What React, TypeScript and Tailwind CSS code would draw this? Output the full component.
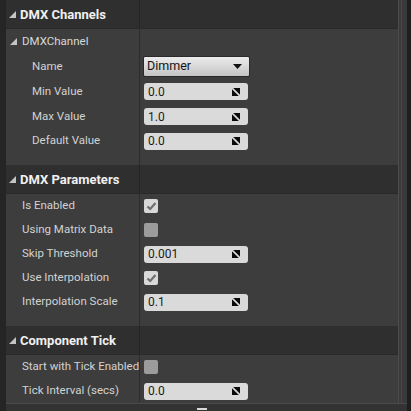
import React from "react";

const font = { fontFamily: "Roboto, 'Liberation Sans', sans-serif" };

function Tri({ className = "" }: { className?: string }) {
  return (
    <svg width="7" height="7" viewBox="0 0 7 7" className={className}>
      <polygon points="7,0 7,7 0,7" fill="#c4c4c4" />
    </svg>
  );
}

function SpinIcon() {
  return (
    <svg width="8" height="8" viewBox="0 0 8 8">
      <polygon points="1.2,0 8,0 8,6.8" fill="#0a0a0a" />
      <polygon points="0,1.2 0,8 6.8,8" fill="#0a0a0a" />
    </svg>
  );
}

function NumInput({ value }: { value: string }) {
  return (
    <div className="w-[104px] h-[17px] bg-[#dadada] rounded-[3px] flex items-center justify-between pl-[4px] pr-[8px] text-[12px] text-[#1c1c1c]">
      <span>{value}</span>
      <SpinIcon />
    </div>
  );
}

function Check({ checked }: { checked: boolean }) {
  return (
    <div
      className={`w-[14px] h-[14px] rounded-[2px] flex items-center justify-center ${
        checked ? "bg-[#d8d8d8]" : "bg-[#9c9c9c]"
      }`}
    >
      {checked && (
        <svg width="11" height="10" viewBox="0 0 11 10">
          <path d="M1.5 5.5 L4.2 8 L9.5 2" stroke="#6e6e6e" strokeWidth="2.2" fill="none" />
        </svg>
      )}
    </div>
  );
}

function Dropdown() {
  return (
    <div className="w-[107px] h-[21px] rounded-[2px] border border-[#2a2a2a] bg-gradient-to-b from-[#ececec] to-[#c4c4c4] flex items-center justify-between pl-[3px] pr-[7px] text-[12.5px] text-[#141414] -ml-[1px]">
      <span>Dimmer</span>
      <svg width="9" height="5" viewBox="0 0 9 5">
        <polygon points="0,0 9,0 4.5,5" fill="#111" />
      </svg>
    </div>
  );
}

function Row({
  label,
  indent,
  h = "h-[24px]",
  children,
}: {
  label: string;
  indent: string;
  h?: string;
  children?: React.ReactNode;
}) {
  return (
    <div className={`flex ${h}`}>
      <div className={`w-[134px] border-r border-[#2c2c2c] flex items-center pt-[2px] ${indent} text-[11.5px] text-[#d2d2d2] whitespace-nowrap overflow-hidden`}>
        {label}
      </div>
      <div className="flex-1 flex items-center pt-[2px] pl-[4px]">{children}</div>
    </div>
  );
}

function Header({ title }: { title: string }) {
  return (
    <div className="flex h-[28px] bg-[#2f2f2f] shadow-[0_1px_0_#2a2a2a]">
      <div className="w-[134px] border-r border-[#262626] flex items-center pt-[1px] pl-[3px] gap-[4px]">
        <Tri />
        <span className="text-[13px] font-bold text-[#f0f0f0] whitespace-nowrap">{title}</span>
      </div>
      <div className="flex-1" />
    </div>
  );
}

function Gap() {
  return (
    <div className="flex h-[13px]">
      <div className="w-[134px] border-r border-[#2c2c2c]" />
      <div className="flex-1" />
    </div>
  );
}

export default function App() {
  return (
    <div className="w-[411px] h-[411px] bg-[#1e1e1e] flex overflow-hidden" style={font}>
      <div className="w-[6px] bg-[#252525]" />
      <div className="flex flex-col w-[401px]">
        <div className="flex flex-1 min-h-0">
          <div className="w-[392px] bg-[#3d3d3d] flex flex-col">
            <Header title="DMX Channels" />
            <div className="flex h-[25px]">
              <div className="w-[134px] border-r border-[#2c2c2c] flex items-center pt-[2px] pl-[4px] gap-[5px] text-[11.5px] text-[#d8d8d8]">
                <Tri />
                <span>DMXChannel</span>
              </div>
              <div className="flex-1" />
            </div>
            <Row label="Name" indent="pl-[26px]" h="h-[25px]">
              <Dropdown />
            </Row>
            <Row label="Min Value" indent="pl-[26px]" h="h-[25px]">
              <NumInput value="0.0" />
            </Row>
            <Row label="Max Value" indent="pl-[26px]" h="h-[25px]">
              <NumInput value="1.0" />
            </Row>
            <Row label="Default Value" indent="pl-[26px]">
              <NumInput value="0.0" />
            </Row>
            <Gap />
            <Header title="DMX Parameters" />
            <Row label="Is Enabled" indent="pl-[16px]">
              <Check checked />
            </Row>
            <Row label="Using Matrix Data" indent="pl-[16px]">
              <Check checked={false} />
            </Row>
            <Row label="Skip Threshold" indent="pl-[16px]">
              <NumInput value="0.001" />
            </Row>
            <Row label="Use Interpolation" indent="pl-[16px]">
              <Check checked />
            </Row>
            <Row label="Interpolation Scale" indent="pl-[16px]">
              <NumInput value="0.1" />
            </Row>
            <Gap />
            <Header title="Component Tick" />
            <Row label="Start with Tick Enabled" indent="pl-[16px]">
              <Check checked={false} />
            </Row>
            <Row label="Tick Interval (secs)" indent="pl-[16px]">
              <NumInput value="0.0" />
            </Row>
          </div>
          <div className="w-[9px] bg-[#3a3a3a] border-l border-[#4c4c4c] flex">
            <div className="w-[2px]" />
            <div className="w-[1px] bg-[#474747]" />
          </div>
        </div>
        <div className="h-[8px] bg-[#333333] border-t border-[#4a4a4a] flex items-center justify-center pr-[10px]">
          <div className="w-[10px] h-[2px] bg-[#d8d8d8] mt-[2px]" />
        </div>
      </div>
      <div className="w-[4px] bg-[#1e1e1e]" />
    </div>
  );
}
